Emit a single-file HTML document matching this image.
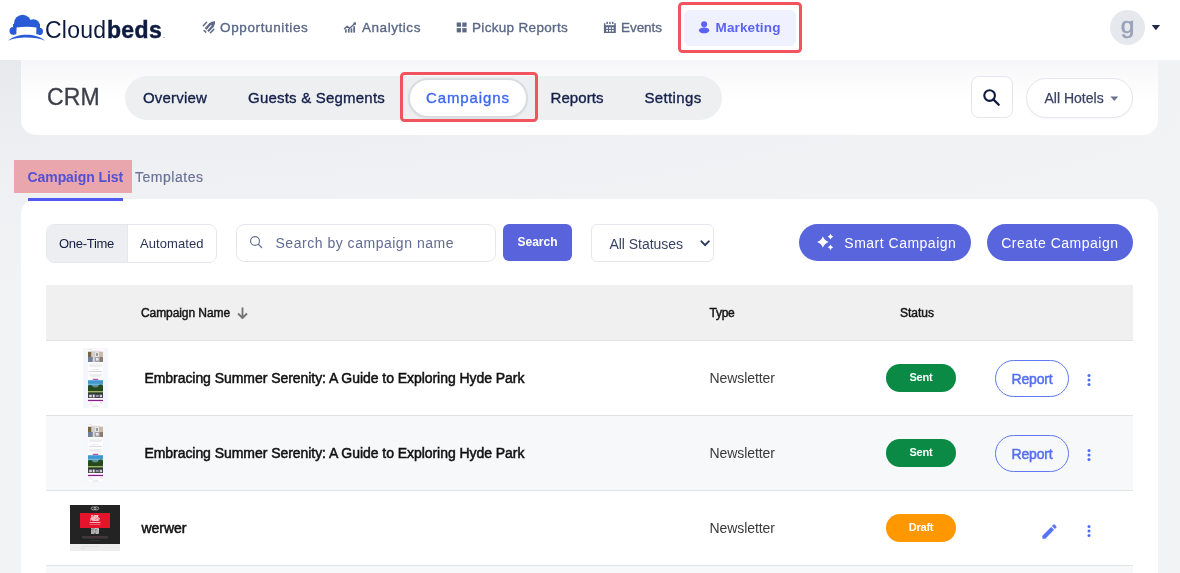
<!DOCTYPE html>
<html lang="en">
<head>
<meta charset="utf-8">
<title>Cloudbeds CRM - Campaigns</title>
<style>
*{box-sizing:border-box;margin:0;padding:0}
html,body{width:1180px;height:573px;overflow:hidden}
body{position:relative;font-family:"Liberation Sans",sans-serif;color:#16213f;
  background:radial-gradient(ellipse 1400px 300px at 0 0,#e2e4e9 0%,#e9eaee 25%,#eeeff2 50%,#f1f2f4 80%,#f2f3f5 100%)}
#app{position:absolute;left:0;top:0;width:1180px;height:573px;will-change:transform}
.abs{position:absolute;white-space:nowrap;line-height:1}
/* ---------- top header ---------- */
#topbar{position:absolute;left:0;top:0;width:1180px;height:60px;background:#fff}
.logo-text{left:45px;top:18.5px;font-size:23px;letter-spacing:.25px;color:#0d1b40}
.logo-text b{font-weight:700;letter-spacing:.35px;margin-left:.6px;-webkit-text-stroke:.45px #0d1b40}
.logo-text small{font-size:7px;font-weight:400;margin-left:1px}
.nav{font-size:13.5px;color:#5b6886;top:21px;-webkit-text-stroke:0.35px #5b6886}
.nav.active{color:#5b62f6;font-weight:700;-webkit-text-stroke:0}
.navpill{position:absolute;left:684px;top:10px;width:112px;height:35.5px;border-radius:6px;background:#f0f1fe}
.redbox{position:absolute;border:3px solid #f2545f;border-radius:4.5px}
.avatar{position:absolute;left:1110px;top:10px;width:35px;height:35px;border-radius:50%;background:#e6e8ed}
.avatar span{position:absolute;left:-.5px;width:35px;top:3.7px;text-align:center;transform:scaleX(1.12);font-size:22px;color:#98a1b9;line-height:24px;-webkit-text-stroke:.5px #98a1b9}
/* ---------- CRM card ---------- */
#crm{position:absolute;left:21px;top:60px;width:1137px;height:75px;border-radius:0 0 15px 15px;
  background:linear-gradient(180deg,#f6f6f8 0px,#fbfbfc 20px,#ffffff 42px)}
.crm-title{left:47px;top:86px;font-size:23px;letter-spacing:.2px;color:#3c3e49;-webkit-text-stroke:.3px #3c3e49}
.pillnav{position:absolute;left:125px;top:76px;width:597px;height:44px;border-radius:22px;background:#eeeff1}
.pn{font-size:15px;color:#14204a;top:90px;-webkit-text-stroke:.35px #14204a}
.pn.on{color:#3d66f4;-webkit-text-stroke:.35px #3d66f4}
.pn-active{position:absolute;left:408px;top:78px;width:120px;height:40px;border-radius:20px;background:#fff;border:2px solid #d9dce0;box-shadow:0 1px 2px rgba(20,30,60,.06)}
.sbtn{position:absolute;left:971px;top:76px;width:42px;height:42px;border:1px solid #e4e7ee;border-radius:8px;background:#fff}
.hotels{position:absolute;left:1026px;top:78px;width:107px;height:40px;border:1px solid #e4e7ee;border-radius:20px;background:#fff;box-shadow:0 1px 2px rgba(20,30,60,.04)}
/* ---------- tabs ---------- */
.hl-pink{position:absolute;left:14px;top:160px;width:118px;height:33px;background:#e9a6ac}
.tab{font-size:14px;top:170px;color:#6a7395;-webkit-text-stroke:.2px #6a7395}
.tab.on{color:#5350d4;font-weight:700;-webkit-text-stroke:0}
.tab-underline{position:absolute;left:28px;top:198px;width:95px;height:3px;background:#5159f4;z-index:3}
/* ---------- main card ---------- */
#main{position:absolute;left:21px;top:199px;width:1137px;height:400px;border-radius:15px 15px 0 0;background:#fff}
.seg{position:absolute;left:25px;top:25px;width:171px;height:38.5px;border:1px solid #e4e7ee;border-radius:8px;background:#fff;overflow:hidden}
.seg-on{position:absolute;left:0;top:0;width:81px;height:100%;background:#eceef1;border-right:1px solid #e4e7ee}
.sinput{position:absolute;left:215px;top:25px;width:260px;height:37.5px;border:1px solid #e4e7ee;border-radius:8px;background:#fff}
.btn-search{position:absolute;left:482px;top:25px;width:69px;height:36.5px;border-radius:6px;background:#5964dc;color:#fff;text-align:center}
.btn-search span{display:block;font-size:12px;font-weight:700;line-height:36px}
.sel{position:absolute;left:570px;top:25px;width:123px;height:37.5px;border:1px solid #e4e7ee;border-radius:6px;background:#fff}
.btn-pill{position:absolute;top:25px;height:37px;border-radius:19px;background:#5865dc}
.thead{position:absolute;left:25px;top:86px;width:1087px;height:56px;background:#f0f0f0;border-bottom:1px solid #e2e2e4}
.th{top:21.6px;font-size:12px;color:#141414;-webkit-text-stroke:.45px #141414}
.row{position:absolute;left:25px;width:1087px;height:75px;background:#fff;border-bottom:1px solid #e1e2e6}
.row.alt{background:#f7f8fa}
.title{top:30px;font-size:14px;letter-spacing:-.05px;color:#111;-webkit-text-stroke:.5px #111}
.type{left:663.5px;top:30px;font-size:14px;letter-spacing:-.07px;color:#3a3a3a}
.badge{position:absolute;left:840px;top:23px;width:70px;height:28px;border-radius:14px;text-align:center;color:#fff}
.badge span{display:block;font-size:11px;font-weight:700;line-height:27px;letter-spacing:-.2px}
.badge.sent{background:#0a8a45}
.badge.draft{background:#ff9800}
.btn-report{position:absolute;left:949px;top:19px;width:74px;height:37px;border:1px solid #6078f5;border-radius:19px;text-align:center;color:#5670ee}
.btn-report span{display:block;font-size:14px;line-height:37px;letter-spacing:-.17px;-webkit-text-stroke:.5px #5670ee}
.kebab{left:1034px;top:30px;fill:#4f6df2}
</style>
</head>
<body>
<div id="app">

<!-- ================= TOP BAR ================= -->
<div id="topbar">
  <svg class="abs" style="left:0;top:0" width="60" height="48" viewBox="0 0 60 48">
    <g fill="#2a5bd7">
      <circle cx="22.6" cy="23.4" r="8.6"/>
      <circle cx="33.4" cy="25.7" r="6.5"/>
      <circle cx="13.3" cy="30.9" r="3.8"/>
      <circle cx="39.3" cy="31.4" r="3.7"/>
      <rect x="13" y="24" width="27" height="11.5"/>
    </g>
    <path d="M16.2 38 L16.6 27.6 Q26 26 36.4 27.4 L36.2 38 Z" fill="#fff"/>
    <path d="M7 40.2 C 16 32.2 37 32.2 46 40.2" fill="none" stroke="#fff" stroke-width="2.6"/>
    <path d="M8.2 40.7 C 17 32.9 36 32.9 44.9 40.7 C 36 36.3 17 36.3 8.2 40.7 Z" fill="#2a5bd7"/>
  </svg>
  <div class="abs logo-text">Cloud<b>beds</b><small>.</small></div>

  <!-- Opportunities -->
  <svg class="abs" style="left:198px;top:16px" width="24" height="22" viewBox="198 16 24 22">
    <g stroke="#5b6886" fill="none" stroke-linecap="round">
      <path d="M204.7 28.2 L209.5 22.9 Q212.4 20.9 215.0 21.2 Q215.4 24.2 213.6 26.9 L208.7 32.1 Z" fill="#5b6886" stroke="none"/>
      <path d="M206.7 30.3 L211.0 25.6" stroke="#fff" stroke-width="1.15"/>
      <path d="M203.3 25.7 L206.6 22.3" stroke-width="1.5"/>
      <path d="M210.4 32.8 L213.7 29.4" stroke-width="1.5"/>
      <path d="M204.1 30.5 L205.8 32.1" stroke-width="1.5"/>
    </g>
  </svg>
  <div class="abs nav" style="left:220px;letter-spacing:.63px">Opportunities</div>

  <!-- Analytics -->
  <svg class="abs" style="left:338px;top:16px" width="24" height="22" viewBox="338 16 24 22">
    <g fill="#5b6886">
      <rect x="345.0" y="29.4" width="1.7" height="3.2"/>
      <rect x="347.9" y="29.0" width="1.7" height="3.6"/>
      <rect x="350.6" y="28.4" width="1.7" height="4.2"/>
      <rect x="353.3" y="26.2" width="1.7" height="6.4"/>
      <rect x="353.6" y="22.4" width="2.4" height="2.4"/>
    </g>
    <path d="M344.4 28.8 L347.2 26.3 L349.5 28.4 L354.8 23.5" fill="none" stroke="#5b6886" stroke-width="1.3" stroke-linecap="round" stroke-linejoin="round"/>
  </svg>
  <div class="abs nav" style="left:362px;letter-spacing:.55px">Analytics</div>

  <!-- Pickup Reports -->
  <svg class="abs" style="left:456px;top:22px" width="12" height="12" viewBox="0 0 12 12">
    <g fill="#5b6886"><rect x=".7" y=".5" width="4.3" height="4.3"/><rect x="6.3" y=".5" width="4.3" height="4.3"/><rect x=".7" y="6.1" width="4.3" height="4.3"/><rect x="6.3" y="6.1" width="4.3" height="4.3"/></g>
  </svg>
  <div class="abs nav" style="left:472px;letter-spacing:.32px">Pickup Reports</div>

  <!-- Events -->
  <svg class="abs" style="left:596px;top:16px" width="24" height="22" viewBox="596 16 24 22">
    <g fill="#5b6886">
      <rect x="603.9" y="25.3" width="11.9" height="7.6" rx=".5"/>
      <rect x="603.9" y="23.2" width="1.5" height="3"/><rect x="614.3" y="23.2" width="1.5" height="3"/>
      <rect x="606.4" y="21.7" width="1.5" height="2.4" rx=".3"/><rect x="609.2" y="21.7" width="1.5" height="2.4" rx=".3"/><rect x="612.0" y="21.7" width="1.5" height="2.4" rx=".3"/>
    </g>
    <g fill="#fff">
      <rect x="606.1" y="27.3" width="1.9" height="1.6"/><rect x="609.0" y="27.3" width="1.9" height="1.6"/><rect x="611.8" y="27.3" width="1.9" height="1.6"/>
      <rect x="606.1" y="30.0" width="1.9" height="1.6"/><rect x="609.0" y="30.0" width="1.9" height="1.6"/><rect x="611.8" y="30.0" width="1.9" height="1.6"/>
    </g>
  </svg>
  <div class="abs nav" style="left:621px;letter-spacing:-.05px">Events</div>

  <!-- Marketing (active, highlighted) -->
  <div class="navpill"></div>
  <svg class="abs" style="left:696px;top:18px" width="16" height="18" viewBox="696 18 16 18">
    <circle cx="704.1" cy="24.3" r="3.0" fill="#5b62f6"/>
    <ellipse cx="704.1" cy="30.4" rx="5.2" ry="2.9" fill="#5b62f6"/>
  </svg>
  <div class="abs nav active" style="left:715.5px;letter-spacing:.14px">Marketing</div>
  <div class="redbox" style="left:678px;top:2px;width:124px;height:51px"></div>

  <!-- avatar -->
  <div class="avatar"><span>g</span></div>
  <svg class="abs" style="left:1151px;top:24px" width="10" height="7" viewBox="0 0 10 7"><path d="M.7 .9 H9.1 L4.9 6.2 Z" fill="#232b4d"/></svg>
</div>

<!-- ================= CRM CARD ================= -->
<div id="crm"></div>
<div class="abs crm-title">CRM</div>
<div class="pillnav"></div>
<div class="pn-active"></div>
<div class="abs pn" style="left:143px;letter-spacing:.19px">Overview</div>
<div class="abs pn" style="left:248px;letter-spacing:.21px">Guests &amp; Segments</div>
<div class="abs pn on" style="left:426px;letter-spacing:.90px">Campaigns</div>
<div class="abs pn" style="left:550.5px;letter-spacing:.07px">Reports</div>
<div class="abs pn" style="left:644.5px;letter-spacing:.35px">Settings</div>
<div class="redbox" style="left:400px;top:72px;width:138px;height:50px"></div>

<div class="sbtn">
  <svg class="abs" style="left:10.3px;top:11.3px" width="20" height="20" viewBox="0 0 20 20">
    <circle cx="7.6" cy="7.6" r="5.3" fill="none" stroke="#0f1a3e" stroke-width="2.1"/>
    <path d="M11.6 11.6 L16.7 16.7" stroke="#0f1a3e" stroke-width="2.3" stroke-linecap="round"/>
  </svg>
</div>
<div class="hotels">
  <div class="abs" style="left:17.5px;top:12px;font-size:14px;color:#3a4365;-webkit-text-stroke:.25px #3a4365">All Hotels</div>
  <svg class="abs" style="left:83px;top:16.5px" width="9" height="6" viewBox="0 0 9 6"><path d="M.4 .5 H8.2 L4.3 4.9 Z" fill="#6d7489"/></svg>
</div>

<!-- ================= TABS ================= -->
<div class="hl-pink"></div>
<div class="abs tab on" style="left:27.5px;top:169.5px;letter-spacing:-.07px">Campaign List</div>
<div class="abs tab" style="left:135px;letter-spacing:.52px">Templates</div>
<div class="tab-underline"></div>

<!-- ================= MAIN CARD ================= -->
<div id="main">
  <!-- segmented -->
  <div class="seg"><div class="seg-on"></div>
    <div class="abs" style="left:12px;top:12.4px;font-size:13px;letter-spacing:-.29px;color:#141d3f">One-Time</div>
    <div class="abs" style="left:93px;top:11.5px;font-size:13px;letter-spacing:.07px;color:#2b3456">Automated</div>
  </div>
  <!-- search input -->
  <div class="sinput">
    <svg class="abs" style="left:11.6px;top:10.4px" width="14.6" height="14.6" viewBox="0 0 16 16">
      <circle cx="6.6" cy="6.6" r="4.9" fill="none" stroke="#6a7398" stroke-width="1.35"/>
      <path d="M10.2 10.2 L13.8 13.7" stroke="#6a7398" stroke-width="1.35" stroke-linecap="round"/>
    </svg>
    <div class="abs" style="left:38.5px;top:10.5px;font-size:14px;letter-spacing:.52px;color:#626b92">Search by campaign name</div>
  </div>
  <div class="btn-search"><span>Search</span></div>
  <!-- select -->
  <div class="sel">
    <div class="abs" style="left:17.5px;top:12px;font-size:14px;letter-spacing:-.04px;color:#3a4365">All Statuses</div>
    <svg class="abs" style="left:107px;top:14px" width="13" height="10" viewBox="0 0 13 10"><path d="M2.4 2.3 L6.1 6.2 L9.8 2.3" fill="none" stroke="#2b3759" stroke-width="1.9" stroke-linecap="round" stroke-linejoin="round"/></svg>
  </div>
  <!-- buttons -->
  <div class="btn-pill" style="left:778px;width:172px">
    <svg class="abs" style="left:0;top:0" width="44" height="37" viewBox="0 0 44 37" fill="#fff">
      <path d="M23.90 12.25 Q25.28 16.62 29.65 18.00 Q25.28 19.38 23.90 23.75 Q22.52 19.38 18.15 18.00 Q22.52 16.62 23.90 12.25 Z"/>
      <path d="M31.50 9.80 Q32.13 12.02 34.35 12.65 Q32.13 13.28 31.50 15.50 Q30.87 13.28 28.65 12.65 Q30.87 12.02 31.50 9.80 Z"/>
      <path d="M31.50 20.50 Q32.13 22.72 34.35 23.35 Q32.13 23.98 31.50 26.20 Q30.87 23.98 28.65 23.35 Q30.87 22.72 31.50 20.50 Z"/>
    </svg>
    <div class="abs" style="left:45.3px;top:11.8px;font-size:14px;letter-spacing:.5px;color:#fff">Smart Campaign</div>
  </div>
  <div class="btn-pill" style="left:966px;width:146px">
    <div class="abs" style="left:14.2px;top:11.8px;font-size:14px;letter-spacing:.51px;color:#fff">Create Campaign</div>
  </div>

  <!-- table -->
  <div class="thead">
    <div class="abs th" style="left:95px;letter-spacing:-.08px">Campaign Name</div>
    <svg class="abs" style="left:188.5px;top:19.8px" width="15" height="16" viewBox="0 0 14 15"><path d="M7 2.4 V12 M2.8 8 L7 12.2 L11.2 8" fill="none" stroke="#757575" stroke-width="1.75" stroke-linejoin="round"/></svg>
    <div class="abs th" style="left:663.5px;letter-spacing:-.25px">Type</div>
    <div class="abs th" style="left:854px">Status</div>
  </div>

  <div class="row" style="top:142px">
    <svg class="abs" style="left:37px;top:7px" width="25" height="60" viewBox="83 348 25 60">
      <clipPath id="clip2"><rect x="88" y="380.2" width="15" height="17.8"/></clipPath>
      <filter id="soft" x="-5%" y="-5%" width="110%" height="110%"><feGaussianBlur stdDeviation=".35"/></filter>
      <rect x="83" y="348" width="25" height="60" fill="#f5f7fc"/>
      <rect x="88" y="349" width="15" height="58" fill="#fdfdfe"/>
      <rect x="88.6" y="349.5" width="3" height=".5" fill="#c9c9cf"/>
      <rect x="91" y="350.8" width="9" height=".5" fill="#dcaed6"/>
      <g filter="url(#soft)">
        <rect x="88" y="351.8" width="15" height="10.2" fill="#aaa39d"/>
        <rect x="88" y="351.8" width="3.4" height="5.2" fill="#77663c"/>
        <rect x="91.4" y="351.8" width="3.4" height="5.2" fill="#d2cfcd"/>
        <rect x="94.8" y="351.8" width="4.6" height="5.4" fill="#e6e4e4"/>
        <rect x="99.4" y="351.8" width="3.6" height="5.2" fill="#c9bba8"/>
        <rect x="96.2" y="353" width="1.6" height="3" fill="#8d8a88"/>
        <rect x="88" y="357" width="4.8" height="5" fill="#73809a"/>
        <rect x="92.8" y="357" width="2" height="5" fill="#dcd8d8"/>
        <rect x="94.8" y="357.2" width="5" height="4.8" fill="#a3a0ac"/>
        <rect x="96" y="358" width="2.6" height="2.6" fill="#e9e7e7"/>
        <rect x="99.8" y="357" width="3.2" height="5" fill="#8d7b6e"/>
      </g>
      <g fill="#dcdde2">
        <rect x="89.6" y="363.8" width="11.8" height=".5"/><rect x="89" y="365.0" width="13" height=".5"/>
        <rect x="89.6" y="366.2" width="11.8" height=".5"/><rect x="91.6" y="369.2" width="7.8" height=".5"/>
        <rect x="89" y="374.0" width="13" height=".5"/><rect x="89.4" y="375.2" width="12.2" height=".5"/>
        <rect x="90.6" y="376.4" width="10" height=".5"/>
      </g>
      <rect x="88.8" y="371.3" width="13.4" height=".6" fill="#bfc0c8"/>
      <rect x="92.8" y="378.8" width="5.4" height="1" fill="#a02aa0"/>
      <g clip-path="url(#clip2)"><g filter="url(#soft)">
        <rect x="88" y="380.2" width="15" height="17.8" fill="#2c4a26"/>
        <rect x="88" y="380.2" width="15" height="3.4" fill="#3a97d6"/>
        <rect x="88" y="383.4" width="15" height="2.4" fill="#6db5e2"/>
        <ellipse cx="90.2" cy="387.4" rx="2.6" ry="2.4" fill="#244a20"/>
        <ellipse cx="100.6" cy="387.2" rx="2.8" ry="2.6" fill="#26501f"/>
        <ellipse cx="95.4" cy="386.6" rx="3" ry="1.3" fill="#5e8a86"/>
        <rect x="88" y="387.4" width="15" height="3.8" fill="#27481f"/>
        <rect x="88" y="391" width="15" height="1.6" fill="#9fb56c"/>
        <rect x="88" y="392.6" width="15" height="1.4" fill="#2b3a26"/>
        <rect x="88" y="394" width="15" height="4" fill="#45434c"/>
        <rect x="89.2" y="394.8" width="2.6" height="2.4" fill="#d5d5dc"/><rect x="92.8" y="394.6" width="1.8" height="2.8" fill="#ececf0"/>
        <rect x="95.8" y="395" width="3" height="2" fill="#9296a8"/><rect x="99.8" y="394.8" width="2.2" height="2.4" fill="#d0d0d8"/>
      </g></g>
      <rect x="88" y="399.8" width="15" height="1.3" fill="#8d1a8d"/>
      <g fill="#dcdde2">
        <rect x="88.4" y="402.6" width="3.6" height=".5"/><rect x="88.4" y="403.8" width="5" height=".5"/>
        <rect x="93" y="405.2" width="5" height=".5"/><rect x="92" y="406.4" width="7" height=".5"/>
      </g>
      <rect x="100.2" y="402.6" width="2.4" height=".6" fill="#e7a6c6"/>
    
    </svg>
    <div class="abs title" style="left:98.4px">Embracing Summer Serenity: A Guide to Exploring Hyde Park</div>
    <div class="abs type">Newsletter</div>
    <div class="badge sent"><span>Sent</span></div>
    <div class="btn-report"><span>Report</span></div>
    <svg class="abs kebab" width="18" height="18" viewBox="0 0 24 24"><circle cx="12" cy="6" r="2"/><circle cx="12" cy="12" r="2"/><circle cx="12" cy="18" r="2"/></svg>
  </div>
  <div class="row alt" style="top:217px">
    <svg class="abs" style="left:37px;top:7px" width="25" height="60" viewBox="83 348 25 60">
      <rect x="83" y="348" width="25" height="60" fill="#f5f7fc"/>
      <rect x="88" y="349" width="15" height="58" fill="#fdfdfe"/>
      <rect x="88.6" y="349.5" width="3" height=".5" fill="#c9c9cf"/>
      <rect x="91" y="350.8" width="9" height=".5" fill="#dcaed6"/>
      <g filter="url(#soft)">
        <rect x="88" y="351.8" width="15" height="10.2" fill="#aaa39d"/>
        <rect x="88" y="351.8" width="3.4" height="5.2" fill="#77663c"/>
        <rect x="91.4" y="351.8" width="3.4" height="5.2" fill="#d2cfcd"/>
        <rect x="94.8" y="351.8" width="4.6" height="5.4" fill="#e6e4e4"/>
        <rect x="99.4" y="351.8" width="3.6" height="5.2" fill="#c9bba8"/>
        <rect x="96.2" y="353" width="1.6" height="3" fill="#8d8a88"/>
        <rect x="88" y="357" width="4.8" height="5" fill="#73809a"/>
        <rect x="92.8" y="357" width="2" height="5" fill="#dcd8d8"/>
        <rect x="94.8" y="357.2" width="5" height="4.8" fill="#a3a0ac"/>
        <rect x="96" y="358" width="2.6" height="2.6" fill="#e9e7e7"/>
        <rect x="99.8" y="357" width="3.2" height="5" fill="#8d7b6e"/>
      </g>
      <g fill="#dcdde2">
        <rect x="89.6" y="363.8" width="11.8" height=".5"/><rect x="89" y="365.0" width="13" height=".5"/>
        <rect x="89.6" y="366.2" width="11.8" height=".5"/><rect x="91.6" y="369.2" width="7.8" height=".5"/>
        <rect x="89" y="374.0" width="13" height=".5"/><rect x="89.4" y="375.2" width="12.2" height=".5"/>
        <rect x="90.6" y="376.4" width="10" height=".5"/>
      </g>
      <rect x="88.8" y="371.3" width="13.4" height=".6" fill="#bfc0c8"/>
      <rect x="92.8" y="378.8" width="5.4" height="1" fill="#a02aa0"/>
      <g clip-path="url(#clip2)"><g filter="url(#soft)">
        <rect x="88" y="380.2" width="15" height="17.8" fill="#2c4a26"/>
        <rect x="88" y="380.2" width="15" height="3.4" fill="#3a97d6"/>
        <rect x="88" y="383.4" width="15" height="2.4" fill="#6db5e2"/>
        <ellipse cx="90.2" cy="387.4" rx="2.6" ry="2.4" fill="#244a20"/>
        <ellipse cx="100.6" cy="387.2" rx="2.8" ry="2.6" fill="#26501f"/>
        <ellipse cx="95.4" cy="386.6" rx="3" ry="1.3" fill="#5e8a86"/>
        <rect x="88" y="387.4" width="15" height="3.8" fill="#27481f"/>
        <rect x="88" y="391" width="15" height="1.6" fill="#9fb56c"/>
        <rect x="88" y="392.6" width="15" height="1.4" fill="#2b3a26"/>
        <rect x="88" y="394" width="15" height="4" fill="#45434c"/>
        <rect x="89.2" y="394.8" width="2.6" height="2.4" fill="#d5d5dc"/><rect x="92.8" y="394.6" width="1.8" height="2.8" fill="#ececf0"/>
        <rect x="95.8" y="395" width="3" height="2" fill="#9296a8"/><rect x="99.8" y="394.8" width="2.2" height="2.4" fill="#d0d0d8"/>
      </g></g>
      <rect x="88" y="399.8" width="15" height="1.3" fill="#8d1a8d"/>
      <g fill="#dcdde2">
        <rect x="88.4" y="402.6" width="3.6" height=".5"/><rect x="88.4" y="403.8" width="5" height=".5"/>
        <rect x="93" y="405.2" width="5" height=".5"/><rect x="92" y="406.4" width="7" height=".5"/>
      </g>
      <rect x="100.2" y="402.6" width="2.4" height=".6" fill="#e7a6c6"/>
    
    </svg>
    <div class="abs title" style="left:98.4px">Embracing Summer Serenity: A Guide to Exploring Hyde Park</div>
    <div class="abs type">Newsletter</div>
    <div class="badge sent"><span>Sent</span></div>
    <div class="btn-report"><span>Report</span></div>
    <svg class="abs kebab" width="18" height="18" viewBox="0 0 24 24"><circle cx="12" cy="6" r="2"/><circle cx="12" cy="12" r="2"/><circle cx="12" cy="18" r="2"/></svg>
  </div>
  <div class="row" style="top:292px">
    <svg class="abs" style="left:24px;top:14px" width="50" height="46" viewBox="70 505 50 46">
      <rect x="70" y="505" width="50" height="39" fill="#232323"/>
      <rect x="70" y="544" width="50" height="7" fill="#ededed"/>
      <rect x="80" y="513" width="30" height="15" fill="#e5132b"/>
      <ellipse cx="93.6" cy="508.4" rx="2.4" ry="1.5" fill="none" stroke="#eee" stroke-width=".6"/>
      <ellipse cx="96.4" cy="508.4" rx="2.4" ry="1.5" fill="none" stroke="#eee" stroke-width=".6"/>
      <text x="95" y="518" font-size="3.4" font-weight="700" fill="#fff" stroke="#fff" stroke-width=".12" text-anchor="middle" font-family="Liberation Sans, sans-serif" textLength="7.4" lengthAdjust="spacingAndGlyphs">DARK</text>
      <text x="95" y="521.2" font-size="3.4" font-weight="700" fill="#fff" stroke="#fff" stroke-width=".12" text-anchor="middle" font-family="Liberation Sans, sans-serif" textLength="9.2" lengthAdjust="spacingAndGlyphs">FRIDAY</text>
      <rect x="89.6" y="522.2" width="10.8" height=".7" fill="#fff"/>
      <rect x="89.5" y="524.3" width="11" height=".5" fill="#f6a4ad"/>
      <text x="95" y="531.1" font-size="2.9" font-weight="700" fill="#fff" stroke="#fff" stroke-width=".12" text-anchor="middle" font-family="Liberation Sans, sans-serif" textLength="7.8" lengthAdjust="spacingAndGlyphs">CUSTOM</text>
      <text x="95" y="533.7" font-size="2.9" font-weight="700" fill="#fff" stroke="#fff" stroke-width=".12" text-anchor="middle" font-family="Liberation Sans, sans-serif" textLength="7.8" lengthAdjust="spacingAndGlyphs">SHOP NOW</text>
      <rect x="82" y="536.4" width="26" height=".45" fill="#7a4a50"/>
      <rect x="82" y="537.5" width="26" height=".45" fill="#5a5a5a"/>
      <rect x="82" y="538.6" width="26" height=".4" fill="#444"/>
      <rect x="90" y="540.2" width="10" height=".4" fill="#444"/>
      <rect x="81" y="546.3" width="18" height=".5" fill="#d8d8d8"/>
      <rect x="81" y="548.2" width="4" height=".5" fill="#d8d8d8"/>
    </svg>
    <div class="abs title" style="left:95.5px">werwer</div>
    <div class="abs type">Newsletter</div>
    <div class="badge draft"><span>Draft</span></div>
    <svg class="abs" style="left:993.6px;top:30.6px" width="19" height="19" viewBox="0 0 24 24"><path fill="#5873f4" d="M3 17.25V21h3.75L17.81 9.94l-3.75-3.75L3 17.25zM20.71 7.04a.996.996 0 0 0 0-1.410l-2.340-2.340a.996.996 0 0 0-1.410 0l-1.830 1.830 3.750 3.750 1.830-1.830z"/></svg>
    <svg class="abs kebab" style="top:31px" width="18" height="18" viewBox="0 0 24 24"><circle cx="12" cy="6" r="2"/><circle cx="12" cy="12" r="2"/><circle cx="12" cy="18" r="2"/></svg>
  </div>
  <div class="row alt" style="top:367px;height:20px"></div>
</div>



</div>
</body>
</html>
